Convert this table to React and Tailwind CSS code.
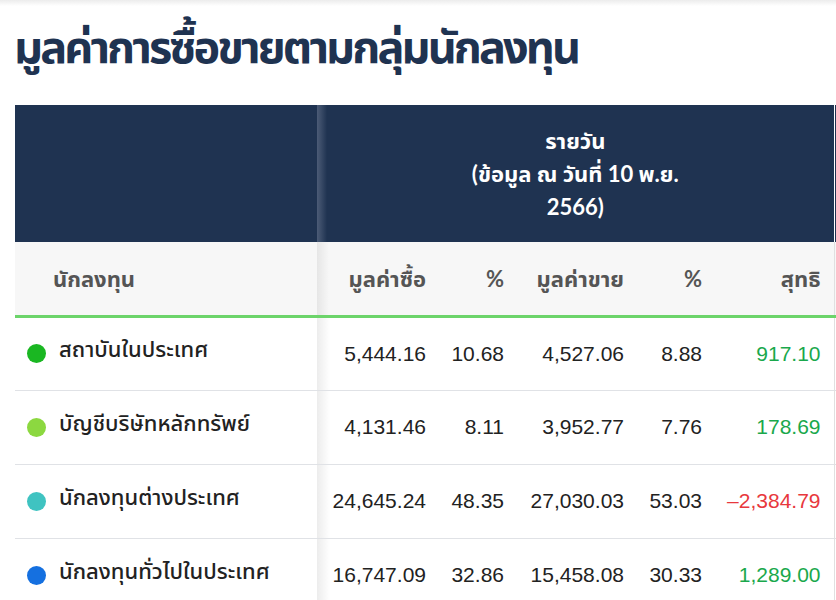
import React from 'react'

const rows = [
  { name: 'สถาบันในประเทศ', dot: 'bg-[#1ab722]', buy: '5,444.16', bp: '10.68', sell: '4,527.06', sp: '8.88', net: '917.10', up: true },
  { name: 'บัญชีบริษัทหลักทรัพย์', dot: 'bg-[#8cd840]', buy: '4,131.46', bp: '8.11', sell: '3,952.77', sp: '7.76', net: '178.69', up: true },
  { name: 'นักลงทุนต่างประเทศ', dot: 'bg-[#3fc3c1]', buy: '24,645.24', bp: '48.35', sell: '27,030.03', sp: '53.03', net: '-2,384.79', up: false },
  { name: 'นักลงทุนทั่วไปในประเทศ', dot: 'bg-[#1570e0]', buy: '16,747.09', bp: '32.86', sell: '15,458.08', sp: '30.33', net: '1,289.00', up: true },
]

const thai = "font-['Noto_Sans_Thai','Noto_Sans',sans-serif]"
const num = "font-['Liberation_Sans',Arial,sans-serif]"
const lato = "font-['Lato','Noto_Sans_Thai',sans-serif]"

export default function App(){
  return (
    <div className="w-[836px] h-[600px] overflow-hidden bg-white">
      <div className="h-[6px] bg-gradient-to-b from-[#ececec] to-white" />
      <h1 className={`${thai} pl-[14px] pt-[12px] text-[45px] leading-[62px] font-bold text-[#1f3351] tracking-[-2.9px]`}>มูลค่าการซื้อขายตามกลุ่มนักลงทุน</h1>

      <div className="mt-[25px] ml-[15px] overflow-hidden">
        <table className="table-fixed border-collapse w-[840px]">
          <colgroup>
            <col className="w-[302px]" />
            <col className="w-[123px]" />
            <col className="w-[78px]" />
            <col className="w-[120px]" />
            <col className="w-[78px]" />
            <col className="w-[118px]" />
            <col className="w-[21px]" />
          </colgroup>
          <thead>
            <tr className="h-[137px] bg-[#1f3351]">
              <th />
              <th colSpan={5} className={`${lato} text-white text-[22px] font-bold leading-[33px] bg-[linear-gradient(to_right,#4c5c77,#1f3351_10px)]`}>
                <div className="w-[250px] mx-auto">รายวัน<br />(ข้อมูล ณ วันที่ 10 พ.ย. 2566)</div>
              </th>
              <th className="border-l border-white" />
            </tr>
            <tr className={`${lato} h-[74px] bg-[#f7f7f7] text-[#555] text-[22px] font-bold border-b-[3px] border-[#6cd46a]`}>
              <th className="text-left pl-[38px]">นักลงทุน</th>
              <th className="text-right pr-[14px] bg-[linear-gradient(to_right,#e6e6e6,#f7f7f7_12px)]">มูลค่าซื้อ</th>
              <th className="text-right pr-[14px]">%</th>
              <th className="text-right pr-[14px]">มูลค่าขาย</th>
              <th className="text-right pr-[14px]">%</th>
              <th className="text-right pr-[13px]">สุทธิ</th>
              <th className="border-l border-[#e0e0e0]" />
            </tr>
          </thead>
          <tbody>
            {rows.map(r => (
              <tr key={r.name} className="h-[74px] border-b border-[#e0e2e6]">
                <td className="pl-[12px]">
                  <div className="flex items-center gap-[13px]">
                    <span className={`w-[19px] h-[19px] rounded-full ${r.dot}`} />
                    <span className={`${thai} text-[22px] text-[#222] font-medium -mt-[6px]`}>{r.name}</span>
                  </div>
                </td>
                <td className={`${num} text-[21px] text-[#222] text-right pr-[14px] bg-[linear-gradient(to_right,#ececec,#fff_13px)]`}>{r.buy}</td>
                <td className={`${num} text-[21px] text-[#222] text-right pr-[14px]`}>{r.bp}</td>
                <td className={`${num} text-[21px] text-[#222] text-right pr-[14px]`}>{r.sell}</td>
                <td className={`${num} text-[21px] text-[#222] text-right pr-[14px]`}>{r.sp}</td>
                <td className={`${num} text-[21px] text-right pr-[13px] ${r.up ? 'text-[#1aa84c]' : 'text-[#e8383d]'}`}>{r.net.replace('-', '–')}</td>
                <td className="border-l border-[#e0e0e0]" />
              </tr>
            ))}
          </tbody>
        </table>
      </div>
    </div>
  )
}
